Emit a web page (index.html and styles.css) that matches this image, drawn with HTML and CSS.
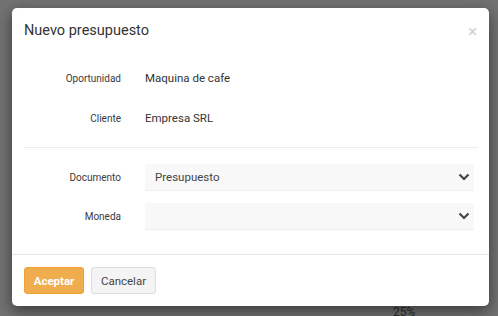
FILE: index.html
```html
<!DOCTYPE html>
<html lang="es">
<head>
    <meta charset="UTF-8">
    <meta name="viewport" content="width=device-width, initial-scale=1.0">
    <title>Nuevo presupuesto</title>
    <link rel="stylesheet" href="styles.css">
</head>
<body>
    <div class="backdrop">
        <span class="page-text">25%</span>

        <div class="modal">
            <div class="modal-header">
                <h4>Nuevo presupuesto</h4>
                <span class="close">&times;</span>
            </div>

            <div class="modal-body">
                <div class="row">
                    <label>Oportunidad</label>
                    <div class="value">Maquina de cafe</div>
                </div>
                <div class="row">
                    <label>Cliente</label>
                    <div class="value">Empresa SRL</div>
                </div>

                <hr>

                <div class="row row-select">
                    <label>Documento</label>
                    <div class="select">
                        <span>Presupuesto</span>
                        <svg width="12" height="8" viewBox="0 0 12 8"><path d="M1.5 1.5 L6 6 L10.5 1.5" fill="none" stroke="#444" stroke-width="2.2"/></svg>
                    </div>
                </div>
                <div class="row row-select">
                    <label>Moneda</label>
                    <div class="select">
                        <span></span>
                        <svg width="12" height="8" viewBox="0 0 12 8"><path d="M1.5 1.5 L6 6 L10.5 1.5" fill="none" stroke="#444" stroke-width="2.2"/></svg>
                    </div>
                </div>
            </div>

            <div class="modal-footer">
                <button class="btn btn-warning">Aceptar</button>
                <button class="btn btn-default">Cancelar</button>
            </div>
        </div>
    </div>
</body>
</html>
```

FILE: styles.css
```css
body {
    margin: 0;
    font-family: Roboto, "Liberation Sans", Arial, sans-serif;
    color: #333;
}
.backdrop {
    position: relative;
    width: 498px;
    height: 316px;
    background-color: #727272;
    padding: 8px 0 0 12px;
    box-sizing: border-box;
    overflow: hidden;
}
.page-text {
    position: absolute;
    left: 393px;
    top: 305px;
    font-size: 12px;
    color: #2a2a2a;
}
.modal {
    position: relative;
    width: 477px;
    background-color: white;
    border-radius: 5px;
    box-shadow: 0 5px 15px rgba(0,0,0,0.5);
}
.modal-header {
    display: flex;
    justify-content: space-between;
    align-items: center;
    padding: 14px 12px;
    height: 18px;
}
.modal-header h4 {
    margin: 0;
    font-size: 14.5px;
    font-weight: normal;
    line-height: 18px;
    color: #333;
}
.close {
    font-size: 17px;
    line-height: 18px;
    color: #cfcfcf;
}
.modal-body {
    padding: 4px 11px 24px 12px;
}
.row {
    display: flex;
    align-items: center;
    height: 40px;
}
.row label {
    width: 97px;
    text-align: right;
    font-size: 10px;
    margin-right: 24px;
    color: #3a3a3a;
}
.value {
    font-size: 11.5px;
}
hr {
    border: none;
    border-top: 1px solid #ececec;
    margin: 9px 0 16px 0;
}
.row-select {
    height: 27px;
    margin-bottom: 12px;
}
.row-select:last-child {
    margin-bottom: 0;
}
.select {
    flex: 1;
    display: flex;
    justify-content: space-between;
    align-items: center;
    height: 27px;
    box-sizing: border-box;
    padding: 0 4px 0 10px;
    margin-right: 4px;
    background-color: #f8f8f8;
    border-bottom: 1px solid #efefef;
    font-size: 11.5px;
    color: #444;
}
.modal-footer {
    display: flex;
    gap: 7px;
    border-top: 1px solid #e5e5e5;
    padding: 12px;
}
.btn {
    height: 27px;
    padding: 0 8px;
    border-radius: 3px;
    font-family: Roboto, "Liberation Sans", Arial, sans-serif;
    font-size: 11.5px;
    cursor: pointer;
}
.btn-warning {
    width: 60px;
    background-color: #f0ad4e;
    border: 1px solid #eea236;
    color: white;
    font-weight: bold;
}
.btn-default {
    width: 65px;
    background-color: #f4f4f4;
    border: 1px solid #ddd;
    color: #444;
}
```
